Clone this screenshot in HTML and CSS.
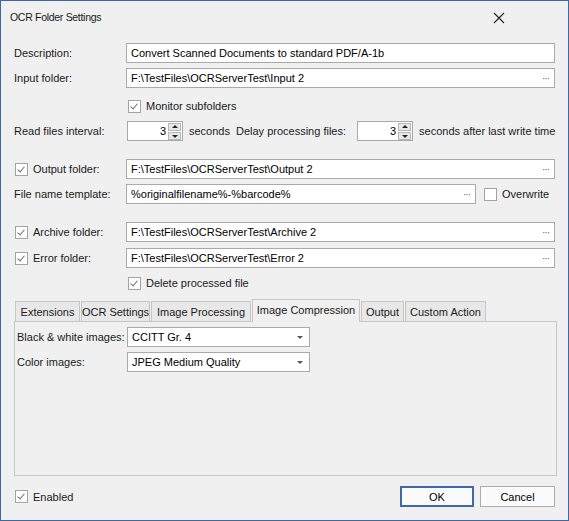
FILE: index.html
```
<!DOCTYPE html>
<html>
<head>
<meta charset="utf-8">
<link rel="stylesheet" href="styles.css">
</head>
<body>
<div class="win">
  <div class="titlebar">
    <span class="title">OCR Folder Settings</span>
    <svg class="close" width="12" height="12" viewBox="0 0 12 12"><path d="M1 1 L11 11 M11 1 L1 11" stroke="#222" stroke-width="1.1" fill="none"/></svg>
  </div>
  <div class="content">
    <div class="row mt8">
      <span class="lbl">Description:</span>
      <div class="field">Convert Scanned Documents to standard PDF/A-1b</div>
    </div>
    <div class="row mt5">
      <span class="lbl">Input folder:</span>
      <div class="field"><span class="val">F:\TestFiles\OCRServerTest\Input 2</span><span class="dots">···</span></div>
    </div>
    <div class="row mt8 indent">
      <span class="cb checked"></span><span class="cbtext">Monitor subfolders</span>
    </div>
    <div class="row mt5">
      <span class="lbl">Read files interval:</span>
      <div class="spin"><span class="num">3</span><span class="btns"><span class="sb up"></span><span class="sb down"></span></span></div>
      <span class="txt sec1">seconds</span>
      <span class="txt delay">Delay processing files:</span>
      <div class="spin"><span class="num">3</span><span class="btns"><span class="sb up"></span><span class="sb down"></span></span></div>
      <span class="txt sec2">seconds after last write time</span>
    </div>
    <div class="row mt18">
      <span class="lbl cblbl"><span class="cb checked"></span><span class="cbtext">Output folder:</span></span>
      <div class="field"><span class="val">F:\TestFiles\OCRServerTest\Output 2</span><span class="dots">···</span></div>
    </div>
    <div class="row mt5">
      <span class="lbl">File name template:</span>
      <div class="field short"><span class="val">%originalfilename%-%barcode%</span><span class="dots">···</span></div>
      <span class="cb ow"></span><span class="cbtext">Overwrite</span>
    </div>
    <div class="row mt18">
      <span class="lbl cblbl"><span class="cb checked"></span><span class="cbtext">Archive folder:</span></span>
      <div class="field"><span class="val">F:\TestFiles\OCRServerTest\Archive 2</span><span class="dots">···</span></div>
    </div>
    <div class="row mt6">
      <span class="lbl cblbl"><span class="cb checked"></span><span class="cbtext">Error folder:</span></span>
      <div class="field"><span class="val">F:\TestFiles\OCRServerTest\Error 2</span><span class="dots">···</span></div>
    </div>
    <div class="row mt5 indent">
      <span class="cb checked"></span><span class="cbtext">Delete processed file</span>
    </div>
    <div class="tabs">
      <span class="tab w1">Extensions</span>
      <span class="tab w2">OCR Settings</span>
      <span class="tab w3">Image Processing</span>
      <span class="tab active w4">Image Compression</span>
      <span class="tab w5">Output</span>
      <span class="tab w6">Custom Action</span>
    </div>
    <div class="panel">
      <div class="prow">
        <span class="plbl">Black &amp; white images:</span>
        <div class="combo">CCITT Gr. 4<span class="arrow"></span></div>
      </div>
      <div class="prow mt5">
        <span class="plbl">Color images:</span>
        <div class="combo">JPEG Medium Quality<span class="arrow"></span></div>
      </div>
    </div>
    <div class="footer">
      <span class="cb checked en"></span><span class="cbtext">Enabled</span>
      <span class="spacer"></span>
      <span class="btn ok">OK</span>
      <span class="btn cancel">Cancel</span>
    </div>
  </div>
</div>
</body>
</html>
```
FILE: styles.css
```
* { box-sizing: border-box; }
html, body { margin: 0; padding: 0; }
body {
  font-family: "Liberation Sans", Arial, sans-serif;
  font-size: 11px;
  color: #1a1a1a;
  background: #f0f0f0;
}
.win {
  width: 569px;
  height: 521px;
  border: 1px solid #3a68ad;
  background: #f0f0f0;
  position: relative;
}
.titlebar {
  height: 34px;
  display: flex;
  align-items: center;
  padding-left: 9px;
  padding-bottom: 2px;
}
.title { font-size: 10.5px; letter-spacing: -0.3px; color: #1a1a1a; }
.close { position: absolute; right: 63px; top: 11px; }
.content { padding: 0 13px 0 13px; }
.row { display: flex; align-items: center; height: 20px; }
.mt5 { margin-top: 5px; }
.mt6 { margin-top: 6px; }
.mt8 { margin-top: 8px; }
.mt18 { margin-top: 18px; }
.lbl { width: 112px; flex: none; display: flex; align-items: center; }
.cblbl { padding-left: 1px; }
.field {
  flex: 1;
  height: 20px;
  background: #fff;
  border: 1px solid #a9a9a9;
  display: flex;
  align-items: center;
  padding: 0 4px;
  color: #000;
}
.field .val { flex: 1; white-space: nowrap; overflow: hidden; }
.field.short { flex: none; width: 350px; }
.dots { font-size: 10px; color: #666; letter-spacing: -1px; padding-right: 1px; }
.indent { padding-left: 114px; }
.cb {
  width: 13px; height: 13px; flex: none;
  border: 1px solid #a3a3a3;
  background: #fff;
  position: relative;
}
.cb.checked::after {
  content: "";
  position: absolute;
  left: 3px; top: 1px;
  width: 3px; height: 6px;
  border-right: 1.2px solid #707070;
  border-bottom: 1.2px solid #707070;
  transform: rotate(40deg);
}
.cbtext { margin-left: 5px; white-space: nowrap; }
.lbl .cbtext { margin-left: 5px; }
.cb.ow { margin-left: 8px; }
.spin {
  width: 56px; height: 20px; flex: none;
  background: #fff;
  border: 1px solid #a9a9a9;
  display: flex;
  align-items: center;
  justify-content: flex-end;
  margin-left: 1px;
  padding-right: 1px;
}
.num { color: #000; margin-right: 2px; }
.btns { display: flex; flex-direction: column; gap: 0; }
.sb {
  width: 13px; height: 8px;
  background: #e8e8e8;
  border: 1px solid #b5b5b5;
  position: relative;
}
.sb.down { margin-top: 1px; }
.sb.up::after, .sb.down::after {
  content: "";
  position: absolute;
  left: 3px;
  border-left: 3px solid transparent;
  border-right: 3px solid transparent;
}
.sb.up::after { top: 1px; border-bottom: 3px solid #222; }
.sb.down::after { top: 2px; border-top: 3px solid #222; }
.txt { white-space: nowrap; }
.sec1 { margin-left: 6px; }
.delay { margin-left: 6px; margin-right: 10px; }
.sec2 { margin-left: 6px; }
.tabs {
  margin-top: 6px;
  height: 22px;
  display: flex;
  align-items: flex-end;
  padding-left: 1px;
}
.tab {
  height: 20px;
  border: 1px solid #c6c6c6;
  border-bottom: none;
  background: #e8e8e8;
  display: flex;
  align-items: center;
  justify-content: center;
  white-space: nowrap;
  margin-right: 1px;
}
.tab.active {
  height: 23px;
  background: #f0f0f0;
  border-color: #c6c6c6;
  margin-bottom: -1px;
  position: relative;
  z-index: 1;
  padding-bottom: 2px;
}
.w1 { width: 65px; }
.w2 { width: 69px; }
.w3 { width: 100px; }
.w4 { width: 108px; }
.w5 { width: 43px; }
.w6 { width: 81px; }
.panel {
  height: 155px;
  border: 1px solid #c6c6c6;
  margin-left: 0;
  margin-right: -2px;
  padding: 5px 0 0 2px;
}
.prow { display: flex; align-items: center; height: 20px; }
.plbl { width: 110px; flex: none; white-space: nowrap; }
.combo {
  width: 183px; height: 20px;
  background: #fff;
  border: 1px solid #a9a9a9;
  display: flex;
  align-items: center;
  padding-left: 4px;
  position: relative;
  color: #000;
}
.arrow {
  position: absolute;
  right: 6px; top: 8px;
  border-left: 3px solid transparent;
  border-right: 3px solid transparent;
  border-top: 3px solid #555;
}
.footer {
  margin-top: 10px;
  display: flex;
  align-items: center;
  height: 21px;
}
.cb.en { margin-left: 1px; }
.spacer { flex: 1; }
.btn {
  height: 21px;
  display: flex;
  align-items: center;
  justify-content: center;
  background: #fbfbfb;
  color: #000;
}
.ok {
  width: 74px;
  border: 1px solid #3d6aa9;
  box-shadow: inset 0 0 0 1px #3d6aa9;
  margin-right: 6px;
}
.cancel {
  width: 75px;
  border: 1px solid #adadad;
}
```
